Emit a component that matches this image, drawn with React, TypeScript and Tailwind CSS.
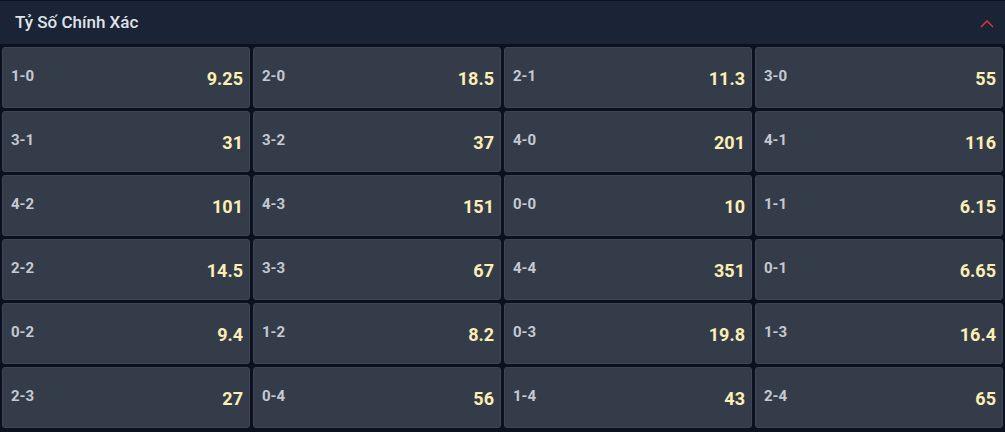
const scores: [string, string][] = [
  ['1-0', '9.25'], ['2-0', '18.5'], ['2-1', '11.3'], ['3-0', '55'],
  ['3-1', '31'], ['3-2', '37'], ['4-0', '201'], ['4-1', '116'],
  ['4-2', '101'], ['4-3', '151'], ['0-0', '10'], ['1-1', '6.15'],
  ['2-2', '14.5'], ['3-3', '67'], ['4-4', '351'], ['0-1', '6.65'],
  ['0-2', '9.4'], ['1-2', '8.2'], ['0-3', '19.8'], ['1-3', '16.4'],
  ['2-3', '27'], ['0-4', '56'], ['1-4', '43'], ['2-4', '65'],
]

function ScoreCell({ score, odds }: { score: string; odds: string }) {
  return (
    <div className="flex h-[61px] items-center justify-between rounded-[3px] border border-[#3e4656] bg-[#343c4a] pl-[8px] pr-[6px]">
      <span className="mb-[2px] text-[15px] font-bold text-[#c5c9d1]">{score}</span>
      <span className="mt-[2px] text-[18px] font-bold text-[#fcefb4]">{odds}</span>
    </div>
  )
}

export default function App() {
  return (
    <div className="h-[432px] w-[1005px] bg-[#0b1120] font-['Roboto',sans-serif]">
      <div className="flex h-[44px] items-center justify-between border-t border-[#0b1120] bg-[#1b2336] pl-[15px] pr-[11px]">
        <span className="text-[17px] font-medium text-[#dfe3ea]">Tỷ Số Chính Xác</span>
        <svg width="14" height="9" viewBox="0 0 14 9" className="mt-[1px]">
          <path d="M1 8 L7 2 L13 8" fill="none" stroke="#e53935" strokeWidth="1.4" />
        </svg>
      </div>
      <div className="grid grid-cols-4 gap-[3px] px-[2px] pt-[3px]">
        {scores.map(([score, odds]) => (
          <ScoreCell key={score} score={score} odds={odds} />
        ))}
      </div>
    </div>
  )
}
